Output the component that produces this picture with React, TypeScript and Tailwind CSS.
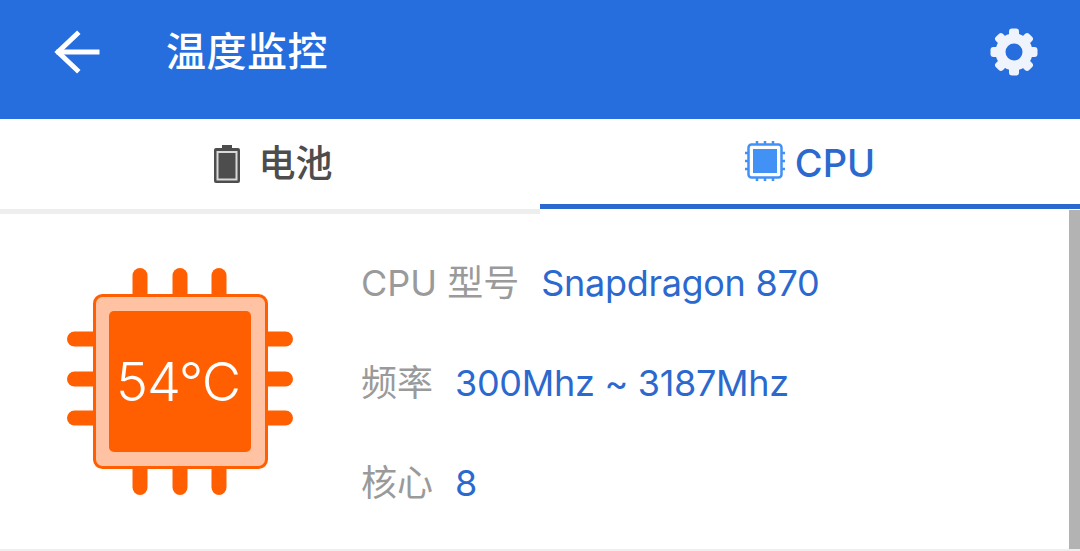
const font = "font-['Inter','Noto_Sans_CJK_SC',sans-serif]";

function ChipIcon() {
  const pins = [140, 180, 219];
  const sidePins = [339, 379, 418];
  return (
    <div className="relative h-[228px] w-[228px]">
      <svg width="228" height="228" viewBox="66 267 228 228">
        {pins.map((x) => (
          <g key={x}>
            <rect x={x - 7.5} y={268} width="15" height="40" rx="7.5" fill="#ff5f00" />
            <rect x={x - 7.5} y={455} width="15" height="40" rx="7.5" fill="#ff5f00" />
          </g>
        ))}
        {sidePins.map((y) => (
          <g key={y}>
            <rect x={67} y={y - 7.5} width="40" height="15" rx="7.5" fill="#ff5f00" />
            <rect x={253} y={y - 7.5} width="40" height="15" rx="7.5" fill="#ff5f00" />
          </g>
        ))}
        <rect x="94.5" y="295.5" width="172" height="172" rx="8" fill="#ffc2a3" stroke="#ff5f00" strokeWidth="3" />
        <rect x="109" y="311" width="142" height="141" rx="5" fill="#ff5f00" />
      </svg>
      <span className={`absolute inset-0 flex items-center justify-center pr-[4px] text-[54px] font-light tracking-[-1px] text-white ${font}`}>
        54°C
      </span>
    </div>
  );
}

function GearIcon() {
  const teeth = [0, 45, 90, 135, 180, 225, 270, 315];
  return (
    <svg width="48" height="48" viewBox="0 0 48 48" className="ml-auto">
      <circle cx="24" cy="24" r="13.5" fill="none" stroke="#eef3fc" strokeWidth="10" />
      {teeth.map((deg) => (
        <rect key={deg} x="19" y="0.5" width="10" height="14" rx="3" fill="#eef3fc" transform={`rotate(${deg} 24 24)`} />
      ))}
    </svg>
  );
}

function InfoRow({ label, value }: { label: string; value: string }) {
  return (
    <div className="flex h-[100px] items-center gap-[22px] text-[36px]">
      <span className="text-[#9a9a9a]">{label}</span>
      <span className="tracking-[-0.3px] text-[#2b69cf]">{value}</span>
    </div>
  );
}

export default function App() {
  return (
    <div className={`flex h-[551px] w-[1080px] flex-col overflow-hidden bg-white ${font}`}>
      <header className="flex h-[119px] shrink-0 items-center bg-[#266ddd] pb-[15px] pl-[54px] pr-[42px] text-white">
        <svg width="46" height="46" viewBox="0 0 46 46" fill="none" stroke="#fff" strokeWidth="5" strokeLinecap="square">
          <path d="M5 23H43" />
          <path d="M23 5L4 23L23 41" />
        </svg>
        <h1 className="ml-[66px] text-[40px] font-medium tracking-[0.5px]">温度监控</h1>
        <GearIcon />
      </header>

      <div className="flex h-[95px] shrink-0">
        <div className="flex h-full w-[540px] items-center justify-center gap-[19px] border-b-[5px] border-[#eeeeee] pl-[6px] text-[37px] font-medium text-[#4d4d4d]">
          <svg width="26" height="38" viewBox="0 0 26 38">
            <path d="M8 0h10v3h6a2 2 0 0 1 2 2v31a2 2 0 0 1-2 2H2a2 2 0 0 1-2-2V5a2 2 0 0 1 2-2h6z" fill="#4d4d4d" />
            <rect x="2.5" y="6" width="21" height="29.5" fill="#d9d9d9" />
            <rect x="4.5" y="8" width="17" height="25.5" fill="#4d4d4d" />
          </svg>
          电池
        </div>
        <div className="flex h-[90px] w-[540px] items-center justify-center gap-[10px] border-b-[5px] border-[#2b69cf] text-[38px] font-medium text-[#2b69cf]">
          <svg width="40" height="40" viewBox="0 0 40 40" className="mt-[-1px]">
            <g stroke="#4291f5" strokeWidth="2.5">
              <path d="M12 0v6M20 0v6M28 0v6M12 34v6M20 34v6M28 34v6M0 12h6M0 20h6M0 28h6M34 12h6M34 20h6M34 28h6" />
            </g>
            <rect x="3.5" y="3.5" width="33" height="33" rx="3" fill="#fff" stroke="#4291f5" strokeWidth="2.5" />
            <rect x="8" y="8" width="24" height="24" fill="#4291f5" />
          </svg>
          <span className="mt-[4px]">CPU</span>
        </div>
      </div>

      <main className="flex min-h-0 flex-1 border-b-2 border-[#eeeeee]">
        <div className="flex flex-1 items-start pl-[66px]">
          <div className="mt-[53px]">
            <ChipIcon />
          </div>
          <div className="ml-[67px] mt-[19px]">
            <InfoRow label="CPU 型号" value="Snapdragon 870" />
            <InfoRow label="频率" value="300Mhz ~ 3187Mhz" />
            <InfoRow label="核心" value="8" />
          </div>
        </div>
        <div className="-mt-[4px] w-[11px] shrink-0 bg-[#b3b3b3]" />
      </main>
    </div>
  );
}
